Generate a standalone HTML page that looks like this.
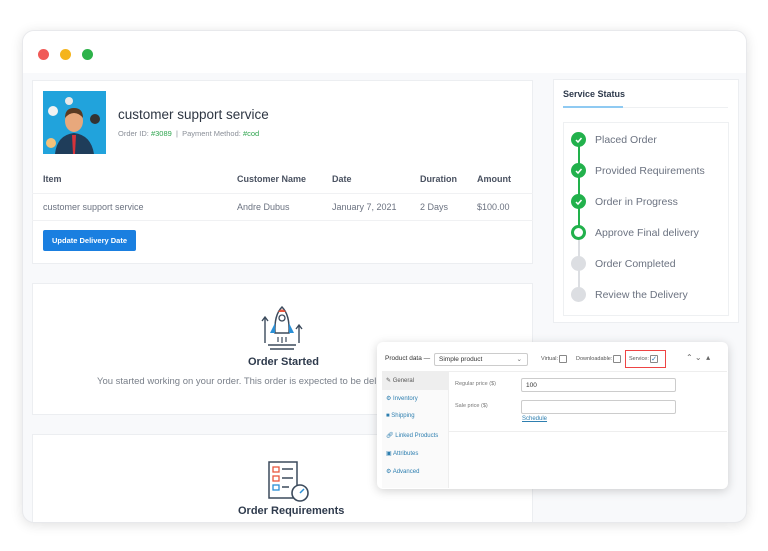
<!DOCTYPE html>
<html><head><meta charset="utf-8"><style>
*{margin:0;padding:0;box-sizing:border-box}
body{width:768px;height:551px;background:#fff;font-family:"Liberation Sans",sans-serif;position:relative;overflow:hidden;color:#3c4453}
.a{position:absolute;white-space:nowrap}
.win{position:absolute;left:22px;top:30px;width:725px;height:493px;border-radius:12px;background:#f8f9fb;box-shadow:0 2px 12px rgba(0,0,0,.12);overflow:hidden;border:1px solid #e8e9ec}
.bar{position:absolute;left:0;top:0;width:100%;height:42px;background:#fff}
.card{position:absolute;background:#fff;border:1px solid #eceef1}
.th{font-size:9px;font-weight:bold;color:#4a5261}
.td{font-size:9px;color:#6b7280}
.st{font-size:10.5px;color:#6b7280}
.dot{position:absolute;width:15px;height:15px;border-radius:50%}
.g{background:#22b14c}
.gr{background:#dcdee2}
.side{font-size:6px;color:#2e7fb0}
</style></head><body>
<div class="win">
<div class="bar"></div>
<div style="position:absolute;left:15px;top:18px;width:11px;height:11px;border-radius:50%;background:#f05a57"></div>
<div style="position:absolute;left:37px;top:18px;width:11px;height:11px;border-radius:50%;background:#f5b41c"></div>
<div style="position:absolute;left:59px;top:18px;width:11px;height:11px;border-radius:50%;background:#2db24a"></div>
</div>

<div class="card" style="left:32px;top:80px;width:501px;height:184px"></div>
<svg class="a" style="left:43px;top:91px" width="63" height="63" viewBox="0 0 63 63">
<rect width="63" height="63" fill="#21a3dc"/>
<circle cx="10" cy="20" r="5" fill="#f2f2f2"/><circle cx="52" cy="28" r="5" fill="#333"/><circle cx="26" cy="10" r="4" fill="#e8e8e8"/><circle cx="8" cy="52" r="5" fill="#f4c27a"/>
<path d="M12 63 Q14 44 31 42 Q48 44 51 63Z" fill="#1f3d5a"/>
<path d="M29 44 L33 44 L32 63 L30 63Z" fill="#d6333a"/>
<ellipse cx="31" cy="30" rx="9" ry="11" fill="#e8a87c"/>
<path d="M22 27 Q22 17 31 17 Q40 17 40 27 Q36 22 31 22 Q26 22 22 27Z" fill="#5a3a22"/>
</svg>
<div class="a" style="left:118px;top:107px;font-size:13.5px;color:#2e3643">customer support service</div>
<div class="a" style="left:118px;top:129px;font-size:7.5px;color:#8a8f98">Order ID: <span style="color:#2fa54f">#3089</span> &nbsp;|&nbsp; Payment Method: <span style="color:#2fa54f">#cod</span></div>
<div class="a th" style="left:43px;top:174px">Item</div>
<div class="a th" style="left:237px;top:174px">Customer Name</div>
<div class="a th" style="left:332px;top:174px">Date</div>
<div class="a th" style="left:420px;top:174px">Duration</div>
<div class="a th" style="left:477px;top:174px">Amount</div>
<div class="a" style="left:32px;top:193px;width:501px;height:1px;background:#f0f1f3"></div>
<div class="a td" style="left:43px;top:202px">customer support service</div>
<div class="a td" style="left:237px;top:202px">Andre Dubus</div>
<div class="a td" style="left:332px;top:202px">January 7, 2021</div>
<div class="a td" style="left:420px;top:202px">2 Days</div>
<div class="a td" style="left:477px;top:202px">$100.00</div>
<div class="a" style="left:32px;top:220px;width:501px;height:1px;background:#f0f1f3"></div>
<div class="a" style="left:43px;top:230px;width:93px;height:21px;background:#1a7fe0;border-radius:2px;color:#fff;font-size:7.5px;font-weight:bold;text-align:center;line-height:21px">Update Delivery Date</div>

<div class="card" style="left:32px;top:283px;width:501px;height:132px"></div>
<svg class="a" style="left:260px;top:305px" width="44" height="46" viewBox="0 0 44 46">
<path d="M22 2 Q30 10 29 28 L15 28 Q14 10 22 2Z" fill="#fff" stroke="#3b4a5c" stroke-width="1.5"/>
<path d="M18 7 Q22 2 26 7Z" fill="#e8573f"/>
<circle cx="22" cy="13" r="3" fill="none" stroke="#3b4a5c" stroke-width="1.3"/>
<path d="M15 18 L10 28 L15 28Z M29 18 L34 28 L29 28Z" fill="#2a8fd6"/>
<path d="M5 38 L5 12 M2 16 L5 12 L8 16 M39 38 L39 20 M36 24 L39 20 L42 24" stroke="#3b4a5c" stroke-width="1.4" fill="none"/>
<path d="M8 40 L36 40 M10 44 L34 44" stroke="#3b4a5c" stroke-width="1.5"/>
<path d="M18 32 L18 37 M22 32 L22 38 M26 32 L26 37" stroke="#3b4a5c" stroke-width="1.2"/>
</svg>
<div class="a" style="left:248px;top:356px;font-size:11px;font-weight:bold;color:#2e3a4c">Order Started</div>
<div class="a" style="left:97px;top:376px;font-size:9.5px;color:#7a808a">You started working on your order. This order is expected to be delivered</div>

<div class="card" style="left:32px;top:434px;width:501px;height:88px;border-bottom:none"></div>
<svg class="a" style="left:265px;top:458px" width="46" height="46" viewBox="0 0 46 46">
<rect x="4" y="4" width="28" height="36" fill="#fff" stroke="#3b4a5c" stroke-width="1.5"/>
<rect x="8" y="9" width="6" height="5" fill="none" stroke="#e8573f" stroke-width="1.3"/>
<rect x="8" y="18" width="6" height="5" fill="none" stroke="#e8573f" stroke-width="1.3"/>
<rect x="8" y="27" width="6" height="5" fill="none" stroke="#2a8fd6" stroke-width="1.3"/>
<path d="M17 11 L28 11 M17 20 L28 20 M17 29 L24 29" stroke="#3b4a5c" stroke-width="1.5"/>
<circle cx="35" cy="35" r="8" fill="#fff" stroke="#3b4a5c" stroke-width="1.6"/>
<path d="M35 35 L39 31" stroke="#2a8fd6" stroke-width="1.5"/>
</svg>
<div class="a" style="left:238px;top:505px;font-size:11px;font-weight:bold;color:#2e3a4c">Order Requirements</div>

<div class="card" style="left:553px;top:79px;width:186px;height:244px"></div>
<div class="a" style="left:563px;top:89px;font-size:9px;font-weight:bold;color:#2e3a4c">Service Status</div>
<div class="a" style="left:563px;top:107px;width:165px;height:1px;background:#eef0f2"></div>
<div class="a" style="left:563px;top:106px;width:60px;height:2px;background:#8fcaf2"></div>
<div class="a" style="left:563px;top:122px;width:166px;height:194px;border:1px solid #eef0f2"></div>
<div class="a" style="left:578px;top:139px;width:1.5px;height:93px;background:#22b14c"></div>
<div class="a" style="left:578px;top:232px;width:1.5px;height:62px;background:#dcdee2"></div>
<div class="dot g" style="left:571px;top:132px"></div>
<div class="dot g" style="left:571px;top:163px"></div>
<div class="dot g" style="left:571px;top:194px"></div>
<div class="dot" style="left:571px;top:225px;background:#fff;border:3.5px solid #22b14c"></div>
<div class="dot gr" style="left:571px;top:256px"></div>
<div class="dot gr" style="left:571px;top:287px"></div>
<svg class="a" style="left:571px;top:132px" width="15" height="80"><g stroke="#fff" stroke-width="1.5" fill="none"><path d="M5 8 L7 10 L10.5 6"/><path d="M5 39 L7 41 L10.5 37"/><path d="M5 70 L7 72 L10.5 68"/></g></svg>
<div class="a st" style="left:595px;top:134px">Placed Order</div>
<div class="a st" style="left:595px;top:165px">Provided Requirements</div>
<div class="a st" style="left:595px;top:196px">Order in Progress</div>
<div class="a st" style="left:595px;top:227px">Approve Final delivery</div>
<div class="a st" style="left:595px;top:258px">Order Completed</div>
<div class="a st" style="left:595px;top:289px">Review the Delivery</div>

<div class="a" style="left:377px;top:342px;width:351px;height:147px;background:#fff;border-radius:6px;box-shadow:0 2px 10px rgba(0,0,0,.18)"></div>
<div class="a" style="left:385px;top:355px;font-size:6.5px;color:#333">Product data —</div>
<div class="a" style="left:434px;top:353px;width:94px;height:13px;border:1px solid #ccc;border-radius:2px;font-size:6.5px;color:#333;padding:2px 4px">Simple product<span style="position:absolute;right:5px;top:1px;color:#666">⌄</span></div>
<div class="a" style="left:541px;top:356px;font-size:5.5px;color:#555">Virtual:</div>
<div class="a" style="left:559px;top:355px;width:8px;height:8px;border:1px solid #888;border-radius:1px"></div>
<div class="a" style="left:576px;top:356px;font-size:5.5px;color:#555">Downloadable:</div>
<div class="a" style="left:613px;top:355px;width:8px;height:8px;border:1px solid #888;border-radius:1px"></div>
<div class="a" style="left:625px;top:350px;width:41px;height:18px;border:1px solid #e44"></div>
<div class="a" style="left:629px;top:356px;font-size:5.5px;color:#555">Service:</div>
<div class="a" style="left:650px;top:355px;width:8px;height:8px;border:1px solid #888;border-radius:1px;font-size:7px;color:#2271b1;line-height:7px;text-align:center">✓</div>
<div class="a" style="left:686px;top:353px;font-size:8px;color:#666">⌃ ⌄ &nbsp;▴</div>
<div class="a" style="left:382px;top:371px;width:345px;height:1px;background:#eee"></div>
<div class="a" style="left:382px;top:372px;width:67px;height:116px;background:#fafafa;border-right:1px solid #eee"></div>
<div class="a" style="left:382px;top:372px;width:67px;height:18px;background:#eee"></div>
<div class="a" style="left:386px;top:377px;font-size:6px;color:#555">✎ General</div>
<div class="a side" style="left:386px;top:395px">⚙ Inventory</div>
<div class="a side" style="left:386px;top:413px">■ Shipping</div>
<div class="a side" style="left:386px;top:432px">🔗︎ Linked Products</div>
<div class="a side" style="left:386px;top:450px">▣ Attributes</div>
<div class="a side" style="left:386px;top:468px">⚙ Advanced</div>
<div class="a" style="left:455px;top:381px;font-size:5.5px;color:#777">Regular price ($)</div>
<div class="a" style="left:521px;top:378px;width:155px;height:14px;border:1px solid #ccc;border-radius:2px;font-size:6.5px;color:#333;padding:3px 4px">100</div>
<div class="a" style="left:455px;top:403px;font-size:5.5px;color:#777">Sale price ($)</div>
<div class="a" style="left:521px;top:400px;width:155px;height:14px;border:1px solid #ccc;border-radius:2px"></div>
<div class="a" style="left:522px;top:416px;font-size:6px;color:#2e7fb0;text-decoration:underline">Schedule</div>
<div class="a" style="left:449px;top:431px;width:278px;height:1px;background:#eee"></div>
</body></html>
